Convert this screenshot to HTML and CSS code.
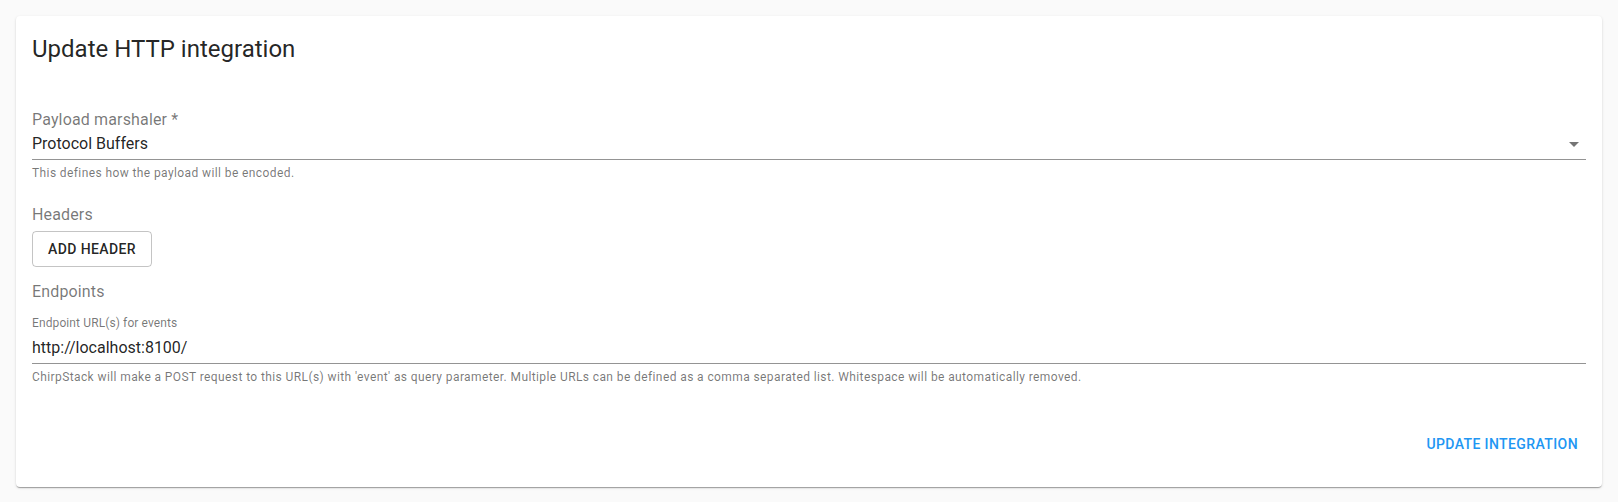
FILE: index.html
```html
<!DOCTYPE html>
<html lang="en">
<head>
<meta charset="utf-8">
<title>Update HTTP integration</title>
<link rel="stylesheet" href="styles.css">
</head>
<body>
<div class="card">
  <div class="card-content">
    <h5 class="title">Update HTTP integration</h5>

    <div class="field field-marshaler">
      <label class="form-label">Payload marshaler *</label>
      <div class="select">
        <div class="input-line select-value">Protocol Buffers</div>
        <svg class="select-icon" viewBox="0 0 24 24" width="24" height="24" aria-hidden="true"><path d="M7 10l5 5 5-5z"></path></svg>
      </div>
      <p class="helper">This defines how the payload will be encoded.</p>
    </div>

    <div class="section section-headers">
      <div class="form-label">Headers</div>
      <button class="btn-outlined" type="button">Add header</button>
    </div>

    <div class="section section-endpoints">
      <div class="form-label">Endpoints</div>
      <div class="field field-url">
        <label class="shrink-label">Endpoint URL(s) for events</label>
        <div class="input-line url-value">http://localhost:8100/</div>
        <p class="helper">ChirpStack will make a POST request to this URL(s) with 'event' as query parameter. Multiple URLs can be defined as a comma separated list. Whitespace will be automatically removed.</p>
      </div>
    </div>
  </div>
  <div class="card-actions">
    <button class="btn-text" type="button">Update integration</button>
  </div>
</div>
</body>
</html>
```

FILE: styles.css
```css
* { box-sizing: border-box; }

html, body {
  margin: 0;
  padding: 0;
}

body {
  background: #fafafa;
  padding: 16px;
  font-family: Roboto, "Liberation Sans", Arial, sans-serif;
  color: rgba(0, 0, 0, 0.87);
}

.card {
  background: #fff;
  border-radius: 4px;
  box-shadow: 0px 2px 1px -1px rgba(0,0,0,0.2), 0px 1px 1px 0px rgba(0,0,0,0.14), 0px 1px 3px 0px rgba(0,0,0,0.12);
  display: flex;
  flex-direction: column;
}

.card-content {
  padding: 16px 16px 0;
  display: flex;
  flex-direction: column;
}

.title {
  margin: 1px 0 0;
  font-size: 24px;
  line-height: 32px;
  font-weight: 400;
  letter-spacing: 0;
  color: rgba(0, 0, 0, 0.87);
}

.field {
  display: flex;
  flex-direction: column;
}

.field-marshaler {
  margin-top: 47px;
}

.form-label {
  display: block;
  font-size: 16px;
  line-height: 16px;
  letter-spacing: 0.15px;
  color: rgba(0, 0, 0, 0.54);
}

.select {
  position: relative;
}

.input-line {
  font-size: 16px;
  line-height: 19px;
  letter-spacing: 0;
  color: rgba(0, 0, 0, 0.87);
  padding: 6px 0 6px;
  border-bottom: 1px solid rgba(0, 0, 0, 0.42);
}

.select-value {
  padding-right: 24px;
}

.select-icon {
  position: absolute;
  right: 0;
  top: 4px;
  fill: rgba(0, 0, 0, 0.54);
}

.helper {
  margin: 3px 0 0;
  font-size: 12px;
  line-height: 20px;
  letter-spacing: 0.4px;
  color: rgba(0, 0, 0, 0.54);
}

.section {
  display: flex;
  flex-direction: column;
  align-items: flex-start;
}

.section-headers {
  margin-top: 24px;
}

.btn-outlined {
  margin-top: 8px;
  font-family: inherit;
  font-size: 14px;
  font-weight: 500;
  line-height: 24px;
  letter-spacing: 0.4px;
  text-transform: uppercase;
  color: rgba(0, 0, 0, 0.87);
  background: transparent;
  border: 1px solid rgba(0, 0, 0, 0.23);
  border-radius: 4px;
  padding: 5px 15px;
  min-width: 64px;
}

.section-endpoints {
  margin-top: 17px;
  align-items: stretch;
}

.field-url {
  margin-top: 17px;
}

.shrink-label {
  display: block;
  font-size: 12px;
  line-height: 12px;
  letter-spacing: 0.11px;
  color: rgba(0, 0, 0, 0.54);
}

.url-value {
  margin-top: 3px;
}

.card-actions {
  display: flex;
  justify-content: flex-end;
  padding: 39px 16px 25px;
}

.btn-text {
  font-family: inherit;
  font-size: 14px;
  font-weight: 500;
  line-height: 24px;
  letter-spacing: 0.4px;
  text-transform: uppercase;
  color: #2196f3;
  background: transparent;
  border: 0;
  border-radius: 4px;
  padding: 6px 8px;
}
```
